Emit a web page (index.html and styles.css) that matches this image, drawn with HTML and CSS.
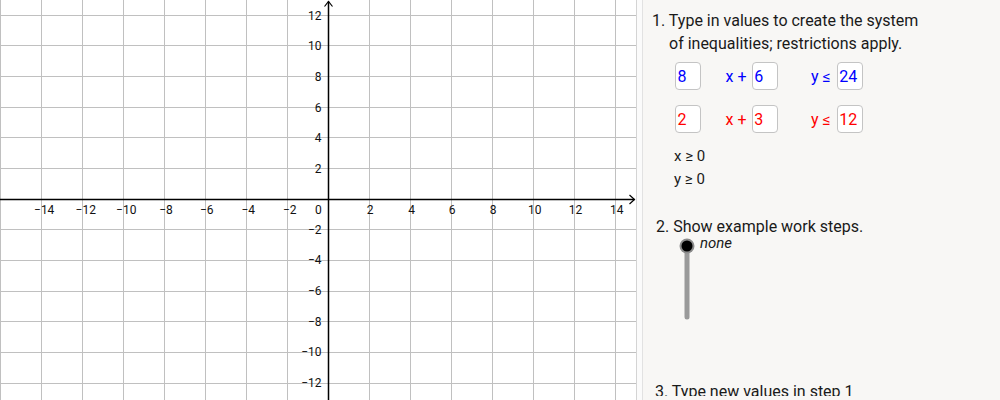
FILE: index.html
```html
<!DOCTYPE html>
<html>
<head>
<meta charset="utf-8">
<link rel="stylesheet" href="styles.css">
</head>
<body>
<div class="app">
  <div class="graph">
    <svg class="graph-svg" width="636" height="400" viewBox="0 0 636 400">
      <path class="grid" d="M0.5 0V400M41.5 0V400M82.5 0V400M123.5 0V400M164.5 0V400M205.5 0V400M246.5 0V400M287.5 0V400M369.5 0V400M410.5 0V400M451.5 0V400M492.5 0V400M533.5 0V400M574.5 0V400M615.5 0V400M0 15.5H636M0 45.5H636M0 76.5H636M0 107.5H636M0 137.5H636M0 168.5H636M0 229.5H636M0 260.5H636M0 291.5H636M0 321.5H636M0 352.5H636M0 383.5H636"/>
      <path class="axis" d="M328.5 400V1.5M0 199.5H634.5"/>
      <path class="arrow" d="M324.5 6.5L328.5 1.5L332.5 6.5M629.5 195L634.5 199.5L629.5 204"/>
      <g class="xlabels">
        <text x="44.2" y="214">−14</text>
        <text x="85.8" y="214">−12</text>
        <text x="126.3" y="214">−10</text>
        <text x="166" y="214">−8</text>
        <text x="206.8" y="214">−6</text>
        <text x="248.2" y="214">−4</text>
        <text x="289.7" y="214">−2</text>
        <text x="318.3" y="214">0</text>
        <text x="370" y="214">2</text>
        <text x="411.7" y="214">4</text>
        <text x="452.2" y="214">6</text>
        <text x="493" y="214">8</text>
        <text x="534.7" y="214">10</text>
        <text x="575.5" y="214">12</text>
        <text x="616.7" y="214">14</text>
      </g>
      <g class="ylabels">
        <text x="321.5" y="19.8">12</text>
        <text x="321.5" y="50">10</text>
        <text x="321.5" y="81">8</text>
        <text x="321.5" y="111.5">6</text>
        <text x="321.5" y="142">4</text>
        <text x="321.5" y="172.8">2</text>
        <text x="321.5" y="233.7">−2</text>
        <text x="321.5" y="264.3">−4</text>
        <text x="321.5" y="295">−6</text>
        <text x="321.5" y="325.7">−8</text>
        <text x="321.5" y="356.3">−10</text>
        <text x="321.5" y="387">−12</text>
      </g>
    </svg>
  </div>
  <div class="splitter"></div>
  <div class="panel">
    <div class="panel-view">
      <div class="step step1">1. Type in values to create the system</div>
      <div class="step step1b">of inequalities; restrictions apply.</div>
      <div class="eq-row blue row1">
        <span class="box">8</span>
        <span class="lbl lbl-x">x +</span>
        <span class="box">6</span>
        <span class="lbl lbl-y">y ≤</span>
        <span class="box">24</span>
      </div>
      <div class="eq-row red row2">
        <span class="box">2</span>
        <span class="lbl lbl-x">x +</span>
        <span class="box">3</span>
        <span class="lbl lbl-y">y ≤</span>
        <span class="box">12</span>
      </div>
      <div class="cond cond1">x ≥ 0</div>
      <div class="cond">y ≥ 0</div>
      <div class="step step2">2. Show example work steps.</div>
      <div class="slider-row">
        <svg class="slider" width="18" height="84" viewBox="0 0 18 84">
          <line class="track" x1="9" y1="8" x2="9" y2="79"/>
          <circle class="knob-halo" cx="9" cy="8" r="7.5"/>
          <circle class="knob" cx="9" cy="8" r="5.5"/>
        </svg>
        <span class="slider-val">none</span>
      </div>
      <div class="step step3">3. Type new values in step 1</div>
    </div>
  </div>
</div>
</body>
</html>
```

FILE: styles.css
```css
html, body {
  margin: 0;
  padding: 0;
  background: #ffffff;
}
body {
  font-family: Roboto, "Liberation Sans", sans-serif;
  width: 1000px;
  height: 400px;
  overflow: hidden;
}
.app {
  display: flex;
  width: 1000px;
  height: 400px;
  overflow: hidden;
}
.graph {
  width: 636px;
  height: 400px;
  flex: 0 0 636px;
  background: #ffffff;
}
.graph-svg {
  display: block;
}
.grid {
  stroke: #c0c0c0;
  stroke-width: 1;
  fill: none;
  shape-rendering: crispEdges;
}
.axis {
  stroke: #000000;
  stroke-width: 1.5;
  fill: none;
}
.arrow {
  stroke: #000000;
  stroke-width: 1.2;
  fill: none;
}
.xlabels text,
.ylabels text {
  font-family: Roboto, "Liberation Sans", sans-serif;
  font-size: 12px;
  fill: #111111;
}
.xlabels text {
  text-anchor: middle;
}
.ylabels text {
  text-anchor: end;
}
.splitter {
  flex: 0 0 7px;
  box-sizing: border-box;
  border-left: 1px solid #d4d4d4;
  border-right: 1px solid #e2e2e2;
  background: #fbfbfb;
}
.panel {
  flex: 1 1 auto;
  background: #f8f7f5;
  color: #1a1a1a;
}
.panel-view {
  height: 395.5px;
  overflow: hidden;
  display: flex;
  flex-direction: column;
  align-items: flex-start;
}
.step {
  font-size: 16px;
  line-height: 23px;
  white-space: nowrap;
  flex: 0 0 auto;
}
.step1 {
  margin-top: 8.6px;
  padding-left: 9px;
}
.step1b {
  padding-left: 26px;
}
.eq-row {
  display: flex;
  align-items: baseline;
  padding-left: 32px;
  font-size: 16px;
  flex: 0 0 auto;
}
.row1 {
  margin-top: 7px;
}
.row2 {
  margin-top: 15.3px;
}
.blue {
  color: #0000ff;
}
.red {
  color: #ff0000;
}
.box {
  box-sizing: border-box;
  width: 26px;
  height: 28px;
  padding: 2px 0 0 1.5px;
  line-height: 24px;
  background: #ffffff;
  border: 1px solid #c4c4c4;
  border-radius: 4px;
}
.lbl {
  box-sizing: border-box;
  line-height: 24px;
  white-space: nowrap;
}
.lbl-x {
  width: 50.7px;
  padding-left: 24.5px;
}
.lbl-y {
  width: 59px;
  padding-left: 33.3px;
}
.cond {
  font-size: 15px;
  line-height: 23.3px;
  padding-left: 31px;
  flex: 0 0 auto;
}
.cond1 {
  margin-top: 12px;
}
.step2 {
  margin-top: 23.5px;
  padding-left: 13px;
}
.slider-row {
  display: flex;
  align-items: flex-start;
  padding-left: 34.7px;
  flex: 0 0 auto;
}
.slider {
  display: block;
}
.track {
  stroke: #9a9a9a;
  stroke-width: 5;
  stroke-linecap: round;
}
.knob-halo {
  fill: #8c8c8c;
}
.knob {
  fill: #000000;
}
.slider-val {
  font-size: 15px;
  font-style: italic;
  line-height: 15px;
  margin-top: -1.5px;
  margin-left: 4.3px;
}
.step3 {
  margin-top: 58.5px;
  padding-left: 12px;
}
```
